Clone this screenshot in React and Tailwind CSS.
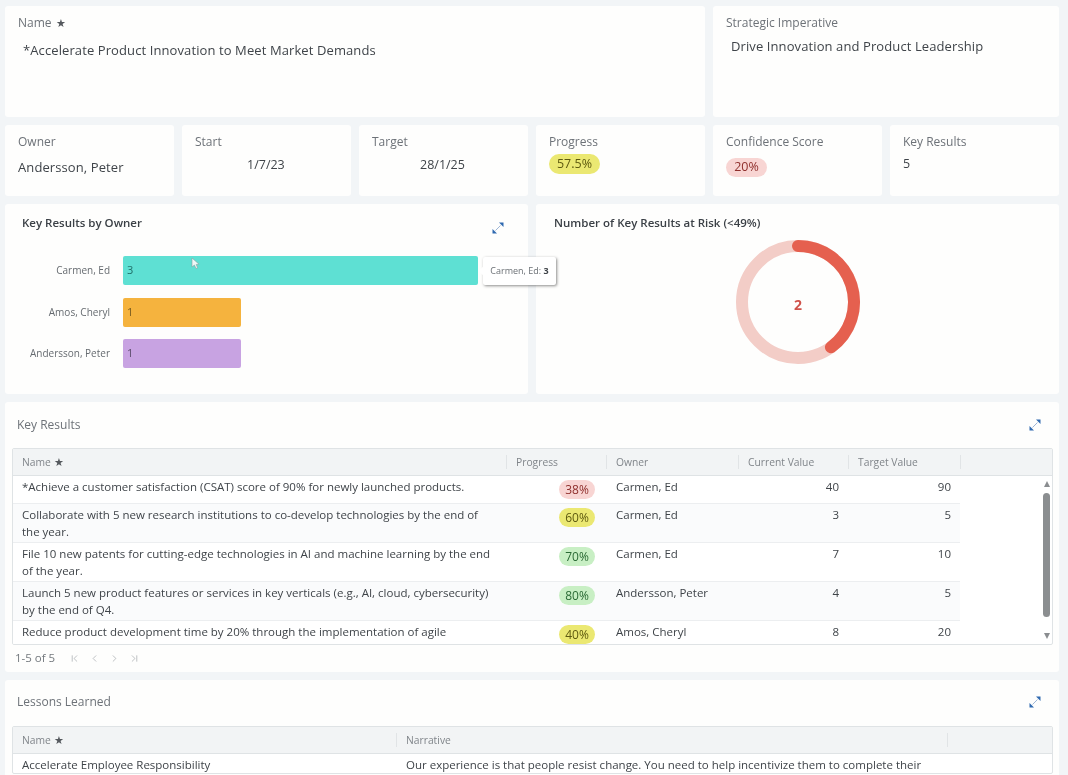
import React from "react";
import { ChevronFirst, ChevronLast, ChevronLeft, ChevronRight } from "lucide-react";

const Expand = () => (
  <svg width="14" height="14" viewBox="0 0 14 14" className="shrink-0">
    <path d="M4.5 9.5 L9.5 4.5" stroke="#9db5d6" strokeWidth="1" />
    <path d="M8 1.5 L12.5 1.5 L12.5 6 Z" fill="#2f69b0" />
    <path d="M1.5 8 L1.5 12.5 L6 12.5 Z" fill="#2f69b0" />
  </svg>
);

const Pill = ({ children, tone }) => {
  const tones = {
    red: "bg-[#f8d5d3] text-[#8f2f2c]",
    yellow: "bg-[#ebe872] text-[#5e5a10]",
    green: "bg-[#c8efc4] text-[#2a6a34]",
  };
  return (
    <span className={`inline-flex h-[19px] w-[36px] items-center justify-center rounded-full text-[12px] ${tones[tone]}`}>
      {children}
    </span>
  );
};

const Label = ({ children }) => <div className="text-[12px] leading-[16px] text-[#6d7278]">{children}</div>;

const Small = ({ children }) => (
  <div className="rounded-[3px] bg-[#fefefd] pl-[13px] pt-[9px]">{children}</div>
);

const rows = [
  { h: "h-[28px]", bg: "bg-white", name: "*Achieve a customer satisfaction (CSAT) score of 90% for newly launched products.", p: "38%", t: "red", o: "Carmen, Ed", c: 40, v: 90 },
  { h: "h-[39px]", bg: "bg-[#fafbfc]", name: "Collaborate with 5 new research institutions to co-develop technologies by the end of the year.", p: "60%", t: "yellow", o: "Carmen, Ed", c: 3, v: 5 },
  { h: "h-[39px]", bg: "bg-white", name: "File 10 new patents for cutting-edge technologies in AI and machine learning by the end of the year.", p: "70%", t: "green", o: "Carmen, Ed", c: 7, v: 10 },
  { h: "h-[39px]", bg: "bg-[#fafbfc]", name: "Launch 5 new product features or services in key verticals (e.g., AI, cloud, cybersecurity) by the end of Q4.", p: "80%", t: "green", o: "Andersson, Peter", c: 4, v: 5 },
  { h: "h-[39px]", bg: "bg-white", name: "Reduce product development time by 20% through the implementation of agile methodologies by Q3.", p: "40%", t: "yellow", o: "Amos, Cheryl", c: 8, v: 20 },
];

const Head = ({ children }) => (
  <div className="relative flex h-full items-center pl-[10px] pt-[1px] text-[10.3px] text-[#80858a]">
    <span className="absolute left-0 top-[6px] h-[14px] w-px bg-[#e1e4e6]" />
    {children}
  </div>
);

const Bar = ({ label, value, width, color, text }) => (
  <div className="flex h-[29px] items-center">
    <div className="w-[105px] text-right text-[10px] text-[#666b70]">{label}</div>
    <div className={`ml-[13px] flex h-full items-center rounded-[2px] pl-[4px] text-[11px] ${width} ${color} ${text}`}>{value}</div>
  </div>
);

export default function App() {
  return (
    <div className="flex h-[775px] flex-col gap-[8px] overflow-hidden bg-[#f2f5f7] pl-[5px] pr-[9px] pt-[6px] font-['Open_Sans',sans-serif] text-[#3f4449] blur-[0.3px]">
      <div className="flex h-[111px] shrink-0 gap-[8px]">
        <div className="w-[700px] rounded-[3px] bg-[#fefefd] pl-[13px] pt-[9px]">
          <div className="flex items-center gap-[4px] text-[12px] leading-[16px] text-[#6d7278]">Name <span className="text-[11px] text-[#55595e]">★</span></div>
          <div className="mt-[10px] pl-[5px] text-[13px] leading-[18px] tracking-[0.1px]">*Accelerate Product Innovation to Meet Market Demands</div>
        </div>
        <div className="flex-1 rounded-[3px] bg-[#fefefd] pl-[13px] pt-[9px]">
          <Label>Strategic Imperative</Label>
          <div className="mt-[6px] pl-[5px] text-[13px] leading-[18px] tracking-[0.1px]">Drive Innovation and Product Leadership</div>
        </div>
      </div>

      <div className="grid h-[71px] shrink-0 grid-cols-6 gap-[8px]">
        <Small>
          <Label>Owner</Label>
          <div className="mt-[8px] text-[13px] leading-[18px] tracking-[0.1px]">Andersson, Peter</div>
        </Small>
        <Small>
          <Label>Start</Label>
          <div className="mt-[6px] pl-[52px] text-[12.5px] leading-[18px]">1/7/23</div>
        </Small>
        <Small>
          <Label>Target</Label>
          <div className="mt-[6px] pl-[48px] text-[12.5px] leading-[18px]">28/1/25</div>
        </Small>
        <Small>
          <Label>Progress</Label>
          <div className="mt-[4px] flex h-[20px] w-[51px] items-center justify-center rounded-full bg-[#ebe872] text-[12.5px] text-[#5e5a10]">57.5%</div>
        </Small>
        <Small>
          <Label>Confidence Score</Label>
          <div className="mt-[8px] flex h-[19px] w-[41px] items-center justify-center rounded-full bg-[#f8d5d3] text-[12.5px] text-[#8f2f2c]">20%</div>
        </Small>
        <Small>
          <Label>Key Results</Label>
          <div className="mt-[5px] text-[12.5px] leading-[18px]">5</div>
        </Small>
      </div>

      <div className="flex h-[190px] shrink-0 gap-[8px]">
        <div className="relative w-[523px] rounded-[3px] bg-[#fefefd]">
          <div className="flex items-start justify-between pl-[17px] pr-[23px] pt-[11px]">
            <div className="text-[11.5px] font-semibold leading-[16px] text-[#3b4046]">Key Results by Owner</div>
            <div className="mt-[6px]"><Expand /></div>
          </div>
          <div className="mt-[21px] flex flex-col gap-[12.5px]">
            <Bar label="Carmen, Ed" value="3" width="w-[355px]" color="bg-[#5ee0d3]" text="text-[#1f6f68]" />
            <Bar label="Amos, Cheryl" value="1" width="w-[118px]" color="bg-[#f5b33e]" text="text-[#76591f]" />
            <Bar label="Andersson, Peter" value="1" width="w-[118px]" color="bg-[#c8a3e2]" text="text-[#5a4a6b]" />
          </div>
          <svg className="absolute left-[186px] top-[53px]" width="9" height="13" viewBox="0 0 9 13">
            <path d="M1 1 L1 10 L3.4 8 L5 11.5 L6.6 10.8 L5.2 7.5 L8 7.2 Z" fill="#eef8f7" stroke="#8aa09e" strokeWidth="0.6" />
          </svg>
          <div className="absolute left-[478px] top-[53px] z-10 flex h-[28px] w-[73px] items-center justify-center whitespace-nowrap rounded-[2px] bg-white text-[9px] text-[#6b7075] shadow-[1px_1px_3px_rgba(0,0,0,0.45)]">
            <span className="absolute left-[-3px] top-[11px] h-[6px] w-[6px] rotate-45 bg-white" />
            Carmen, Ed:&nbsp;<b className="text-[#3f4449]">3</b>
          </div>
        </div>
        <div className="flex-1 rounded-[3px] bg-[#fefefd] pl-[18px] pt-[11px]">
          <div className="text-[11.5px] font-semibold leading-[16px] text-[#3b4046]">Number of Key Results at Risk (&lt;49%)</div>
          <svg width="126" height="126" viewBox="0 0 126 126" className="ml-[181px] mt-[8px]">
            <circle cx="63" cy="63" r="56" fill="none" stroke="#f3cdc7" strokeWidth="12" />
            <path d="M63 7 A56 56 0 0 1 95.9 108.3" fill="none" stroke="#e5604f" strokeWidth="12" strokeLinecap="round" />
            <text x="63" y="71" textAnchor="middle" fontSize="14" fontWeight="700" fill="#d0524a" fontFamily="Open Sans">2</text>
          </svg>
        </div>
      </div>

      <div className="h-[270px] shrink-0 rounded-[3px] bg-[#fefefd] pl-[7px] pr-[6px]">
        <div className="flex h-[46px] items-center justify-between pl-[5px] pr-[11px]">
          <div className="text-[12px] text-[#6d7278]">Key Results</div>
          <Expand />
        </div>
        <div className="relative h-[197px] overflow-hidden rounded-[2px] border border-[#dfe3e5] bg-white">
          <div className="grid h-[27px] grid-cols-[493px_100px_132px_110px_112px_1fr] items-center border-b border-[#dfe3e5] bg-[#f2f4f5]">
            <div className="pl-[9px] text-[10.3px] text-[#80858a]">Name <span className="ml-px text-[11px] text-[#55595e]">★</span></div>
            <Head>Progress</Head>
            <Head>Owner</Head>
            <Head>Current Value</Head>
            <Head>Target Value</Head>
            <Head />
          </div>
          <div className="w-[947px]">
            {rows.map((r) => (
              <div key={r.p} className={`grid grid-cols-[493px_100px_132px_110px_112px] border-b border-[#eceef0] text-[11.5px] leading-[17px] ${r.h} ${r.bg}`}>
                <div className="pl-[9px] pr-[10px] pt-[2px]">{r.name}</div>
                <div className="flex justify-end pr-[11px] pt-[4px]"><Pill tone={r.t}>{r.p}</Pill></div>
                <div className="pl-[10px] pt-[2px]">{r.o}</div>
                <div className="pr-[9px] pt-[2px] text-right">{r.c}</div>
                <div className="pr-[9px] pt-[2px] text-right">{r.v}</div>
              </div>
            ))}
          </div>
          <div className="absolute bottom-[5px] right-[2px] top-[32px] flex w-[7px] flex-col items-center justify-between">
            <span className="h-0 w-0 border-x-[3.5px] border-b-[6px] border-x-transparent border-b-[#8a8d90]" />
            <span className="mb-[16px] mt-[6px] w-[7px] flex-1 rounded-full bg-[#8b8e90]" />
            <span className="h-0 w-0 border-x-[3.5px] border-t-[6px] border-x-transparent border-t-[#8a8d90]" />
          </div>
        </div>
        <div className="flex h-[26px] items-center gap-[9px] pl-[3px] text-[11.5px] text-[#74797e]">
          <span className="mr-[5px]">1-5 of 5</span>
          <ChevronFirst size={11} strokeWidth={1.4} className="text-[#9ba0a4]" />
          <ChevronLeft size={11} strokeWidth={1.4} className="text-[#9ba0a4]" />
          <ChevronRight size={11} strokeWidth={1.4} className="text-[#9ba0a4]" />
          <ChevronLast size={11} strokeWidth={1.4} className="text-[#9ba0a4]" />
        </div>
      </div>

      <div className="h-[120px] shrink-0 rounded-[3px] bg-[#fefefd] pl-[7px] pr-[6px]">
        <div className="flex h-[46px] items-center justify-between pb-[2px] pl-[5px] pr-[11px]">
          <div className="text-[12px] text-[#6d7278]">Lessons Learned</div>
          <Expand />
        </div>
        <div className="overflow-hidden rounded-[2px] border border-[#dfe3e5] bg-white">
          <div className="grid h-[27px] grid-cols-[383px_551px_1fr] items-center border-b border-[#dfe3e5] bg-[#f2f4f5]">
            <div className="pl-[9px] text-[10.3px] text-[#80858a]">Name <span className="ml-px text-[11px] text-[#55595e]">★</span></div>
            <Head>Narrative</Head>
            <Head />
          </div>
          <div className="grid grid-cols-[383px_551px] text-[11.5px] leading-[17px]">
            <div className="pl-[9px] pt-[2px]">Accelerate Employee Responsibility</div>
            <div className="pl-[10px] pt-[2px]">Our experience is that people resist change. You need to help incentivize them to complete their</div>
          </div>
        </div>
      </div>
    </div>
  );
}
